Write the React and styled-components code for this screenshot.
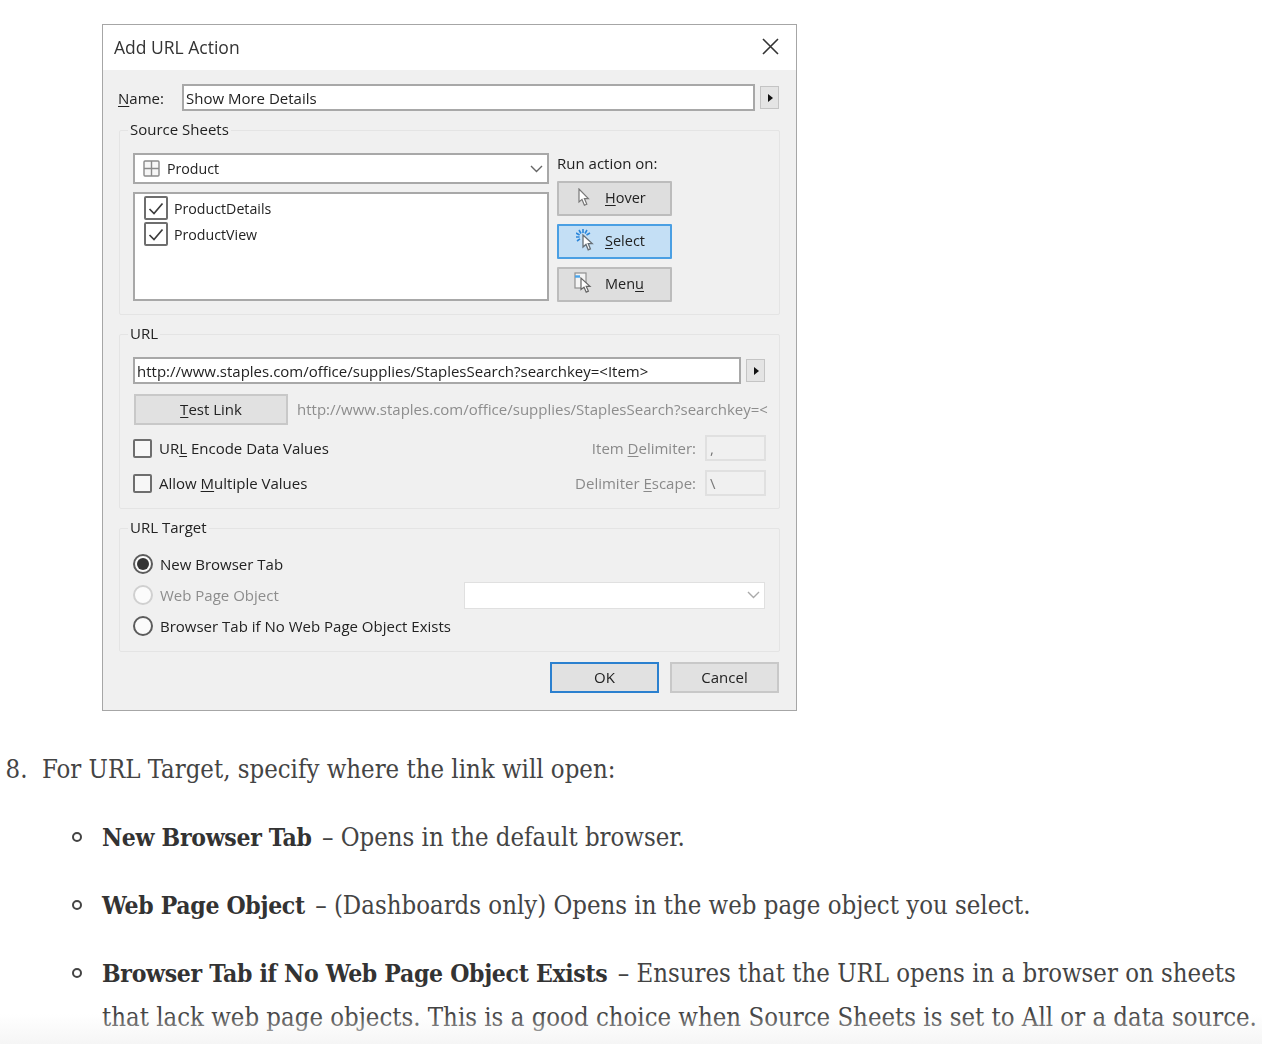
import React from "react";
import styled, { createGlobalStyle } from "styled-components";

const GlobalStyle = createGlobalStyle`
  body {
    margin: 0;
    background: #fff;
    font-family: "DejaVu Serif Condensed", "DejaVu Serif", serif;
  }
`;

const Page = styled.div`
  position: relative;
  width: 1262px;
  height: 1044px;
  overflow: hidden;
  padding-top: 24px;
  box-sizing: border-box;
`;

const BottomFade = styled.div`
  position: absolute;
  left: 0;
  right: 0;
  bottom: 0;
  height: 30px;
  background: linear-gradient(rgba(245, 245, 245, 0), rgba(243, 243, 243, 0.8));
  pointer-events: none;
`;

const Dialog = styled.div`
  box-sizing: border-box;
  width: 695px;
  height: 687px;
  margin-left: 102px;
  border: 1px solid #a6a6a6;
  background: #f0f0f0;
  font-family: "Open Sans", "Noto Sans", sans-serif;
  font-size: 15px;
  color: #222;
  filter: blur(0.5px);

  u {
    text-underline-offset: 2px;
  }
`;

const TitleBar = styled.div`
  box-sizing: border-box;
  display: flex;
  align-items: center;
  justify-content: space-between;
  height: 45px;
  padding: 0 17px 2px 11px;
  background: #fff;
  font-size: 17.5px;
  color: #333;
`;

const Content = styled.div`
  padding: 14px 16px 17px;
`;

const NameRow = styled.div`
  display: flex;
  align-items: center;
  height: 27px;
  margin: 0 0 10px -1px;
`;

const NameLabel = styled.label`
  width: 64px;
`;

const TextBox = styled.div`
  box-sizing: border-box;
  display: flex;
  align-items: center;
  flex: none;
  width: ${(p) => p.$width}px;
  height: 27px;
  padding-left: 2px;
  border: 2px solid #a8a8a8;
  background: #fff;
  white-space: nowrap;
  overflow: hidden;
`;

const ArrowButton = styled.div`
  box-sizing: border-box;
  display: flex;
  align-items: center;
  justify-content: center;
  flex: none;
  width: 19px;
  height: 23px;
  margin-left: ${(p) => p.$gap}px;
  border: 1px solid #c4c4c4;
  background: #e4e4e4;

  &::after {
    content: "";
    margin-left: 2px;
    border-left: 5px solid #111;
    border-top: 4px solid transparent;
    border-bottom: 4px solid transparent;
  }
`;

const Group = styled.fieldset`
  box-sizing: border-box;
  min-width: 0;
  margin: 0 0 10px;
  padding: 14px 13px ${(p) => p.$bottom}px;
  border: 1px solid #e4e4e4;
  border-radius: 2px;
`;

const GroupTitle = styled.legend`
  height: 18px;
  margin-left: -5px;
  padding: 0 2px;
  line-height: 16px;
`;

const SourceRow = styled.div`
  display: flex;
  gap: 8px;
`;

const SheetColumn = styled.div`
  display: flex;
  flex-direction: column;
  gap: 8px;
  width: 416px;
  font-size: 14.2px;
`;

const Combo = styled.div`
  box-sizing: border-box;
  display: flex;
  align-items: center;
  gap: 7px;
  height: 31px;
  padding: 0 4px 0 8px;
  border: 2px solid #a8a8a8;
  background: #fff;

  svg:last-child {
    margin-left: auto;
  }
`;

const SheetList = styled.div`
  box-sizing: border-box;
  height: 109px;
  padding: 1px 9px;
  border: 2px solid #a8a8a8;
  background: #fff;
`;

const SheetRow = styled.div`
  display: flex;
  align-items: center;
  gap: 6px;
  height: 26px;
`;

const CheckBox = styled.span`
  box-sizing: border-box;
  display: flex;
  align-items: center;
  justify-content: center;
  flex: none;
  width: ${(p) => p.$size}px;
  height: ${(p) => p.$size}px;
  border: 2px solid #6e6e6e;
  border-radius: 2px;
  background: ${(p) => (p.$bare ? "#f7f7f7" : "#fff")};
`;

const RunColumn = styled.div`
  display: flex;
  flex-direction: column;
  width: 115px;
`;

const RunLabel = styled.div`
  height: 28px;
  line-height: 21px;
`;

const RunButtons = styled.div`
  display: flex;
  flex-direction: column;
  gap: 7.5px;
  height: 121px;
  font-size: 14.5px;
`;

const RunButton = styled.div`
  box-sizing: border-box;
  display: flex;
  align-items: center;
  flex: 1;
  padding: 0 0 2px ${(p) => p.$inset}px;
  border: 2px solid ${(p) => (p.$active ? "#4a9fe3" : "#bcbcbc")};
  border-radius: 1px;
  background: ${(p) => (p.$active ? "#c4dff5" : "#dedede")};

  svg {
    flex: none;
    margin-right: ${(p) => p.$gap}px;
  }
`;

const UrlRow = styled.div`
  display: flex;
  align-items: center;
`;

const TestRow = styled.div`
  display: flex;
  align-items: center;
  gap: 9px;
  height: 31px;
  margin: 10px 0 10px 1px;
`;

const PushButton = styled.div`
  box-sizing: border-box;
  display: flex;
  align-items: center;
  justify-content: center;
  flex: none;
  width: ${(p) => p.$width}px;
  height: 31px;
  padding-bottom: 2px;
  border: 2px solid ${(p) => (p.$primary ? "#2b80cf" : "#c8c8c8")};
  background: #e1e1e1;
`;

const UrlPreview = styled.div`
  width: 474px;
  padding-bottom: 2px;
  white-space: nowrap;
  color: #8d8d8d;
`;

const OptionRow = styled.div`
  display: flex;
  align-items: center;
  justify-content: space-between;
  height: 26px;
  margin-top: ${(p) => p.$top}px;
`;

const CheckLabel = styled.div`
  display: flex;
  align-items: center;
  gap: 7px;
`;

const DelimiterLabel = styled.div`
  display: flex;
  align-items: center;
  gap: 9px;
  color: #8a8a8a;
`;

const DelimiterField = styled.div`
  box-sizing: border-box;
  width: 61px;
  height: 26px;
  padding-left: 3px;
  border: 2px solid #e0e0e0;
  line-height: 22px;
  color: #777;
`;

const RadioRow = styled.div`
  display: flex;
  align-items: center;
  gap: 7px;
  height: 20px;
  margin-top: ${(p) => p.$top}px;
  color: ${(p) => (p.$disabled ? "#8d8d8d" : "inherit")};
`;

const Radio = styled.span`
  box-sizing: border-box;
  display: flex;
  align-items: center;
  justify-content: center;
  flex: none;
  width: 20px;
  height: 20px;
  border: 2px solid ${(p) => (p.$disabled ? "#d0d0d0" : "#5c5c5c")};
  border-radius: 50%;
  background: #fbfbfb;

  &::after {
    content: "";
    display: ${(p) => (p.$checked ? "block" : "none")};
    width: 12px;
    height: 12px;
    border-radius: 50%;
    background: #333;
  }
`;

const ObjectSelect = styled.div`
  box-sizing: border-box;
  display: flex;
  align-items: center;
  justify-content: flex-end;
  flex: none;
  width: 301px;
  height: 27px;
  margin: 0 1px 0 auto;
  padding-right: 4px;
  border: 1px solid #e0e0e0;
  background: #fff;
`;

const Footer = styled.div`
  display: flex;
  justify-content: flex-end;
  gap: 11px;
  padding-right: 1px;
`;

const Steps = styled.ol`
  margin: 36px 0 0;
  padding-left: 42px;
  font-size: 25.5px;
  line-height: 44px;
  color: #444;
`;

const Step = styled.li`
  &::marker {
    content: "8.  ";
  }
`;

const Bullets = styled.ul`
  margin: 24px 0 0;
  padding-left: 60px;
  list-style: none;
`;

const Bullet = styled.li`
  position: relative;
  margin-bottom: 24px;
  white-space: nowrap;

  &::before {
    content: "";
    position: absolute;
    left: -30px;
    top: 17px;
    box-sizing: border-box;
    width: 10px;
    height: 10px;
    border: 2px solid #444;
    border-radius: 50%;
  }

  strong {
    margin-right: 3px;
    font-size: 24.5px;
    line-height: 1;
    letter-spacing: -0.3px;
    color: #333;
  }
`;

const CloseIcon = () => (
  <svg width="17" height="17" viewBox="0 0 17 17" fill="none" stroke="#333" strokeWidth="1.6">
    <path d="M1 1l15 15M16 1L1 16" />
  </svg>
);

const Chevron = ({ color }) => (
  <svg width="13" height="8" viewBox="0 0 13 8" fill="none" stroke={color} strokeWidth="1.4">
    <path d="M1 1l5.5 5.5L12 1" />
  </svg>
);

const TableIcon = () => (
  <svg width="17" height="17" viewBox="0 0 17 17" fill="#f6f6f6" stroke="#8a8a8a" strokeWidth="1.4">
    <rect x="1" y="1" width="15" height="15" rx="1" />
    <path d="M8.5 1v15M1 8.5h15" />
  </svg>
);

const CheckMark = () => (
  <svg width="16" height="13" viewBox="0 0 16 13" fill="none" stroke="#3c3c3c" strokeWidth="1.7">
    <path d="M1.5 7l4.5 4.5L14.5 1.5" />
  </svg>
);

const HoverIcon = () => (
  <svg width="12" height="19" viewBox="0 0 12 19" fill="#fff" stroke="#777" strokeWidth="1.2">
    <path d="M1 1v13l3-2.6 2.4 5.8 2.4-1-2.4-5.6h4z" />
  </svg>
);

const SelectIcon = () => (
  <svg width="18" height="23" viewBox="0 0 18 23" fill="#fff">
    <path
      d="M7 0v4M3 1l2 3.5M0 4l3.6 2M0 8h3.6M1 12l3-2.2M11 1L9 4.5M14 4l-3.5 2"
      fill="none"
      stroke="#2b86da"
      strokeWidth="1.6"
    />
    <path d="M7 6v12l3-2.6 2.2 5.4 2.2-1-2.2-5.2h4z" stroke="#666f76" strokeWidth="1.3" />
  </svg>
);

const MenuIcon = () => (
  <svg width="18" height="22" viewBox="0 0 18 22" fill="#f4f4f4">
    <rect x="1" y="1" width="11" height="15" stroke="#8f8f8f" strokeWidth="1.2" />
    <path d="M1 4.5h5" stroke="#4aa3e8" strokeWidth="2.4" />
    <path d="M7 6v11.5l3-2.4 2.2 5 2.2-1-2.2-4.8h3.8z" fill="#fff" stroke="#666" strokeWidth="1.2" />
  </svg>
);

export default function App() {
  return (
    <Page>
      <GlobalStyle />
      <Dialog>
        <TitleBar>
          Add URL Action
          <CloseIcon />
        </TitleBar>
        <Content>
          <NameRow>
            <NameLabel>
              <u>N</u>ame:
            </NameLabel>
            <TextBox $width={573}>Show More Details</TextBox>
            <ArrowButton $gap={5} />
          </NameRow>

          <Group $bottom={12}>
            <GroupTitle>Source Sheets</GroupTitle>
            <SourceRow>
              <SheetColumn>
                <Combo>
                  <TableIcon />
                  Product
                  <Chevron color="#666" />
                </Combo>
                <SheetList>
                  <SheetRow>
                    <CheckBox $size={24}>
                      <CheckMark />
                    </CheckBox>
                    ProductDetails
                  </SheetRow>
                  <SheetRow>
                    <CheckBox $size={24}>
                      <CheckMark />
                    </CheckBox>
                    ProductView
                  </SheetRow>
                </SheetList>
              </SheetColumn>
              <RunColumn>
                <RunLabel>Run action on:</RunLabel>
                <RunButtons>
                  <RunButton $inset={19} $gap={15}>
                    <HoverIcon />
                    <span>
                      <u>H</u>over
                    </span>
                  </RunButton>
                  <RunButton $active $inset={17} $gap={11}>
                    <SelectIcon />
                    <span>
                      <u>S</u>elect
                    </span>
                  </RunButton>
                  <RunButton $inset={15} $gap={13}>
                    <MenuIcon />
                    <span>
                      Men<u>u</u>
                    </span>
                  </RunButton>
                </RunButtons>
              </RunColumn>
            </SourceRow>
          </Group>

          <Group $bottom={12}>
            <GroupTitle>URL</GroupTitle>
            <UrlRow>
              <TextBox $width={608}>
                {"http://www.staples.com/office/supplies/StaplesSearch?searchkey=<Item>"}
              </TextBox>
              <ArrowButton $gap={5} />
            </UrlRow>
            <TestRow>
              <PushButton $width={154}>
                <span>
                  <u>T</u>est Link
                </span>
              </PushButton>
              <UrlPreview>
                {"http://www.staples.com/office/supplies/StaplesSearch?searchkey=<"}
              </UrlPreview>
            </TestRow>
            <OptionRow>
              <CheckLabel>
                <CheckBox $size={19} $bare />
                <span>
                  UR<u>L</u> Encode Data Values
                </span>
              </CheckLabel>
              <DelimiterLabel>
                <span>
                  Item <u>D</u>elimiter:
                </span>
                <DelimiterField>,</DelimiterField>
              </DelimiterLabel>
            </OptionRow>
            <OptionRow $top={9}>
              <CheckLabel>
                <CheckBox $size={19} $bare />
                <span>
                  Allow <u>M</u>ultiple Values
                </span>
              </CheckLabel>
              <DelimiterLabel>
                <span>
                  Delimiter <u>E</u>scape:
                </span>
                <DelimiterField>\</DelimiterField>
              </DelimiterLabel>
            </OptionRow>
          </Group>

          <Group $bottom={15}>
            <GroupTitle>URL Target</GroupTitle>
            <RadioRow $top={3}>
              <Radio $checked />
              New Browser Tab
            </RadioRow>
            <RadioRow $top={11} $disabled>
              <Radio $disabled />
              Web Page Object
              <ObjectSelect>
                <Chevron color="#aaa" />
              </ObjectSelect>
            </RadioRow>
            <RadioRow $top={11}>
              <Radio />
              Browser Tab if No Web Page Object Exists
            </RadioRow>
          </Group>

          <Footer>
            <PushButton $width={109} $primary>
              OK
            </PushButton>
            <PushButton $width={109}>Cancel</PushButton>
          </Footer>
        </Content>
      </Dialog>

      <Steps start={8}>
        <Step>
          For URL Target, specify where the link will open:
          <Bullets>
            <Bullet>
              <strong>New Browser Tab</strong> – Opens in the default browser.
            </Bullet>
            <Bullet>
              <strong>Web Page Object</strong> – (Dashboards only) Opens in the web page object you select.
            </Bullet>
            <Bullet>
              <strong>Browser Tab if No Web Page Object Exists</strong> – Ensures that the URL opens in a browser on sheets
              <br />
              that lack web page objects. This is a good choice when Source Sheets is set to All or a data source.
            </Bullet>
          </Bullets>
        </Step>
      </Steps>
      <BottomFade />
    </Page>
  );
}
